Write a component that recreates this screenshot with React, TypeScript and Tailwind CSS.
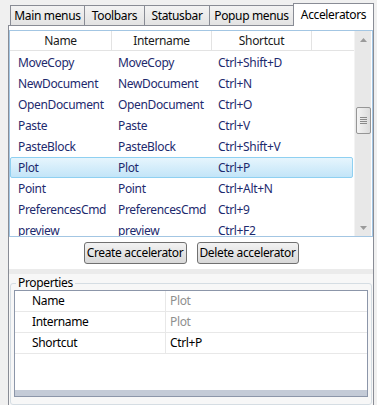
import React from 'react';

type Accel = { name: string; internal: string; shortcut: string };

const accels: Accel[] = [
  { name: 'MoveCopy', internal: 'MoveCopy', shortcut: 'Ctrl+Shift+D' },
  { name: 'NewDocument', internal: 'NewDocument', shortcut: 'Ctrl+N' },
  { name: 'OpenDocument', internal: 'OpenDocument', shortcut: 'Ctrl+O' },
  { name: 'Paste', internal: 'Paste', shortcut: 'Ctrl+V' },
  { name: 'PasteBlock', internal: 'PasteBlock', shortcut: 'Ctrl+Shift+V' },
  { name: 'Plot', internal: 'Plot', shortcut: 'Ctrl+P' },
  { name: 'Point', internal: 'Point', shortcut: 'Ctrl+Alt+N' },
  { name: 'PreferencesCmd', internal: 'PreferencesCmd', shortcut: 'Ctrl+9' },
  { name: 'preview', internal: 'preview', shortcut: 'Ctrl+F2' },
];

const tabs = [
  { label: 'Main menus', w: 'w-[75px]' },
  { label: 'Toolbars', w: 'w-[61px]' },
  { label: 'Statusbar', w: 'w-[66px]' },
  { label: 'Popup menus', w: 'w-[85px]' },
];

// classic Aero-ish push button
const Button = ({ label, w }: { label: string; w: string }) => (
  <div
    className={`${w} h-[22px] flex items-center justify-center whitespace-nowrap rounded-[3px] border border-[#707070] bg-gradient-to-b from-[#f2f2f2] to-[#d8d8d8] text-black`}
  >
    {label}
  </div>
);

const PropRow = ({ label, value, muted }: { label: string; value: string; muted?: boolean }) => (
  <div className="h-[21px] flex border-b border-[#e8e8e8]">
    <div className="w-[151px] pl-[17px] flex items-center border-r border-[#e8e8e8] text-black">{label}</div>
    <div className={`flex-1 pl-[4px] flex items-center ${muted ? 'text-[#8f8f8f]' : 'text-black'}`}>{value}</div>
  </div>
);

export default function App() {
  return (
    <div
      className="w-[377px] h-[405px] overflow-hidden bg-[#f0f0f0] pt-[3px] text-[12px] leading-none tracking-[-0.35px]"
      style={{ fontFamily: '"Noto Sans", "Open Sans", sans-serif' }}
    >
      {/* tab strip */}
      <div className="h-[22px] flex items-end pl-[10px]">
        {tabs.map((t, i) => (
          <div
            key={t.label}
            className={`${t.w} h-[20px] ${i > 0 ? '-ml-px' : ''} flex items-center justify-center whitespace-nowrap border border-b-0 border-[#898c95] bg-gradient-to-b from-[#f3f3f3] to-[#e3e3e3] text-black`}
          >
            {t.label}
          </div>
        ))}
        <div className="w-[81px] h-[23px] -mb-px -ml-px relative z-10 flex items-center justify-center border border-b-0 border-[#898c95] bg-white text-black">
          Accelerators
        </div>
      </div>

      {/* tab panel */}
      <div className="ml-[8px] w-[366px] h-[400px] border border-[#898c95] bg-white flex flex-col">
        {/* list view */}
        <div className="mt-[4px] h-[207px] border border-[#a3c6e3] flex">
          <div className="w-[344px] flex flex-col overflow-hidden">
            <div className="h-[20px] flex border-b border-[#e3e3e3] text-[#1a1a1a] shrink-0">
              <div className="w-[102px] flex items-center justify-center border-r border-[#e3e3e3]">Name</div>
              <div className="w-[100px] flex items-center justify-center border-r border-[#e3e3e3]">Intername</div>
              <div className="w-[100px] flex items-center justify-center border-r border-[#e3e3e3]">Shortcut</div>
              <div className="flex-1" />
            </div>
            <div className="pt-[1px] flex flex-col">
              {accels.map((a) => {
                const sel = a.name === 'Plot';
                return (
                  <div
                    key={a.name}
                    className={`h-[21px] shrink-0 flex items-center whitespace-nowrap text-[#1d2a6e] ${
                      sel
                        ? 'rounded-[2px] border border-[#8fd0f1] bg-gradient-to-b from-[#e6f5fd] to-[#c3e5f8] mr-[1px]'
                        : 'border border-transparent'
                    }`}
                  >
                    <div className="w-[101px] pl-[7px]">{a.name}</div>
                    <div className="w-[100px] pl-[6px]">{a.internal}</div>
                    <div className="w-[100px] pl-[6px]">{a.shortcut}</div>
                  </div>
                );
              })}
            </div>
          </div>
          {/* vertical scrollbar */}
          <div className="w-[17px] bg-[#e8e8e8] border-l border-[#f3f3f3] flex flex-col items-center">
            <div className="h-[17px] flex items-center justify-center">
              <svg width="7" height="4" viewBox="0 0 7 4">
                <path d="M0 4 L3.5 0 L7 4 Z" fill="#9a9a9a" />
              </svg>
            </div>
            <div className="h-[59px]" />
            <div className="w-[15px] h-[27px] rounded-[2px] border border-[#969696] bg-gradient-to-r from-[#f4f4f4] to-[#dcdcdc] flex flex-col items-center justify-center gap-[1px]">
              <div className="w-[7px] h-px bg-[#8a8a8a]" />
              <div className="w-[7px] h-px bg-[#8a8a8a]" />
              <div className="w-[7px] h-px bg-[#8a8a8a]" />
              <div className="w-[7px] h-px bg-[#8a8a8a]" />
            </div>
            <div className="flex-1" />
            <div className="h-[17px] flex items-center justify-center">
              <svg width="7" height="4" viewBox="0 0 7 4">
                <path d="M0 0 L3.5 4 L7 0 Z" fill="#9a9a9a" />
              </svg>
            </div>
          </div>
        </div>

        {/* buttons */}
        <div className="mt-[5px] flex justify-center gap-[10px]">
          <Button label="Create accelerator" w="w-[103px]" />
          <Button label="Delete accelerator" w="w-[102px]" />
        </div>

        {/* splitter */}
        <div className="mt-[5px] h-[5px] bg-[#ebebeb]" />

        {/* properties area */}
        <div className="flex-1 bg-[#f7f7f7] px-[1px] pt-[4px]">
          <div className="relative h-[122px] rounded-[3px] border border-[#d5dde3] mt-[5px] px-[3px] pt-[6px]">
            <div className="absolute left-[5px] -top-[7px] px-[2px] bg-[#f7f7f7] text-black">Properties</div>
            <div className="h-[107px] border border-[#8c96a9] bg-white flex flex-col">
              <PropRow label="Name" value="Plot" muted />
              <PropRow label="Intername" value="Plot" muted />
              <PropRow label="Shortcut" value="Ctrl+P" />
              <div className="flex-1" />
              <div className="h-[6px] bg-[#c4cbd7]" />
            </div>
          </div>
        </div>
      </div>
    </div>
  );
}
